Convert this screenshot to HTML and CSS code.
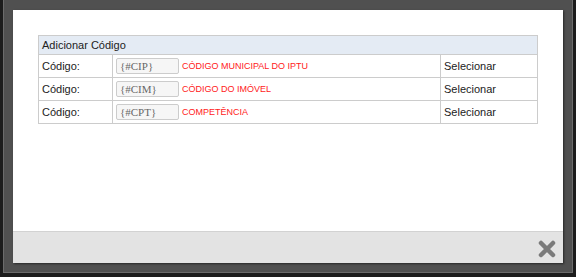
FILE: index.html
```html
<!DOCTYPE html>
<html lang="pt-BR">
<head>
    <meta charset="UTF-8">
    <title>Adicionar Código</title>
    <link rel="stylesheet" href="styles.css">
</head>
<body>

<div class="modal-frame">
    <div class="modal">
        <div class="modal-body">
            <table class="code-table">
                <tr>
                    <th colspan="3">Adicionar Código</th>
                </tr>
                <tr>
                    <td class="col-label">Código:</td>
                    <td class="col-code"><input type="text" value="{#CIP}" readonly><span class="code-desc">CÓDIGO MUNICIPAL DO IPTU</span></td>
                    <td class="col-action">Selecionar</td>
                </tr>
                <tr>
                    <td class="col-label">Código:</td>
                    <td class="col-code"><input type="text" value="{#CIM}" readonly><span class="code-desc">CÓDIGO DO IMÓVEL</span></td>
                    <td class="col-action">Selecionar</td>
                </tr>
                <tr>
                    <td class="col-label">Código:</td>
                    <td class="col-code"><input type="text" value="{#CPT}" readonly><span class="code-desc">COMPETÊNCIA</span></td>
                    <td class="col-action">Selecionar</td>
                </tr>
            </table>
        </div>
        <div class="modal-footer">
            <svg class="close-btn" width="18" height="18" viewBox="0 0 18 18">
                <path d="M3 3 L15 15 M15 3 L3 15" stroke="#7a7a7a" stroke-width="4.5" stroke-linecap="round"/>
            </svg>
        </div>
    </div>
</div>

</body>
</html>
```

FILE: styles.css
```css
body {
    margin: 0;
    padding: 0 3px;
    background-color: #1c1c1c;
    font-family: 'Liberation Sans', Arial, sans-serif;
}

.modal-frame {
    width: 550px;
    padding: 10px 9px 9px 9px;
    background-color: #505050;
    border: 1px solid #6b6b6b;
    border-top: none;
}

.modal {
    background-color: #ffffff;
    box-shadow: 1px 1px 2px rgba(0, 0, 0, 0.5);
}

.modal-body {
    height: 196px;
    padding: 25px 25px 0 25px;
}

.code-table {
    width: 500px;
    border-collapse: collapse;
    font-size: 11px;
    color: #222;
}

.code-table th {
    height: 18px;
    padding: 0 3px;
    text-align: left;
    font-weight: normal;
    background-color: #e4ebf4;
    border: 1px solid #cccccc;
}

.code-table td {
    height: 22px;
    padding: 0 3px;
    border: 1px solid #cccccc;
}

.col-label {
    width: 67px;
}

.col-action {
    width: 90px;
}

.code-table input {
    width: 63px;
    height: 16px;
    padding: 0 3px;
    margin: 0 3px 0 0;
    box-sizing: border-box;
    border: 1px solid #cccccc;
    border-radius: 2px;
    background-color: #f6f6f6;
    color: #666;
    font-family: 'Liberation Serif', 'Times New Roman', serif;
    font-size: 11px;
    vertical-align: middle;
}

.code-desc {
    color: #ff1a1a;
    font-size: 9px;
    vertical-align: middle;
}

.modal-footer {
    height: 31px;
    background-color: #e3e3e3;
    border-top: 1px solid #d2d2d2;
    display: flex;
    justify-content: flex-end;
    align-items: center;
    padding-right: 7px;
}

.close-btn {
    display: block;
    margin-top: 2px;
}
```
